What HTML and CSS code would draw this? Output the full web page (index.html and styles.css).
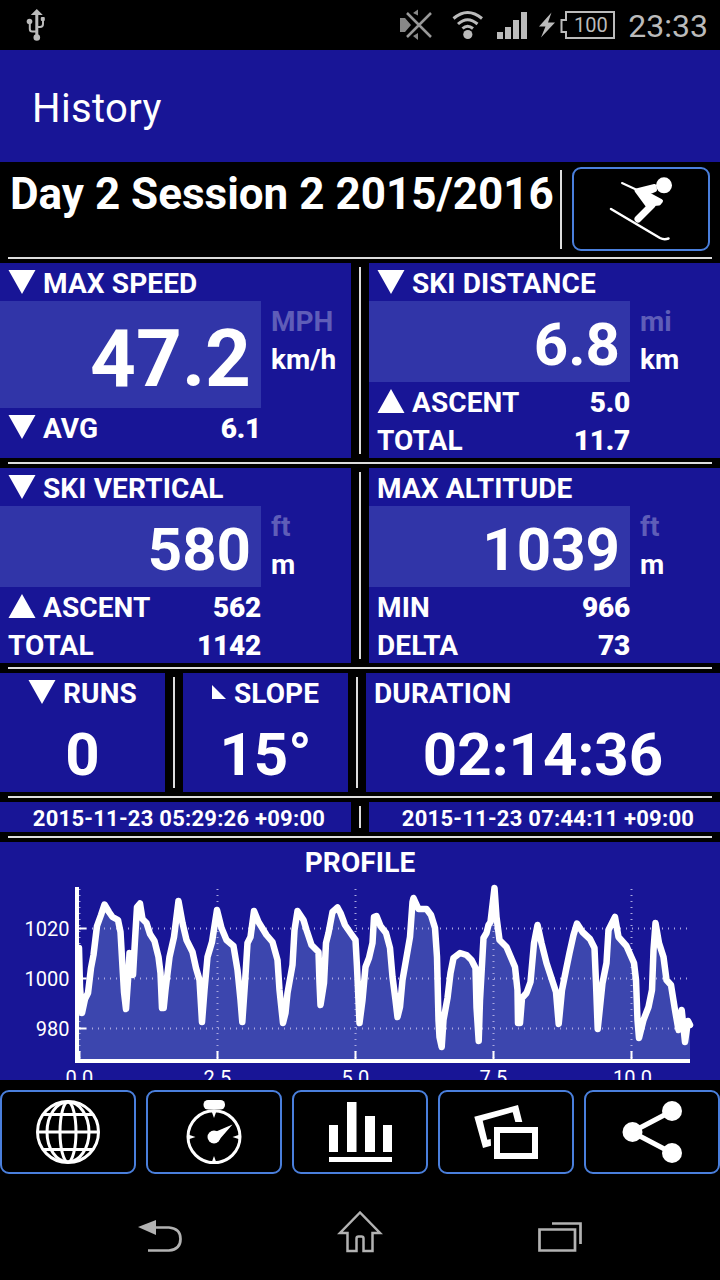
FILE: index.html
```html
<!DOCTYPE html>
<html lang="en">
<head>
    <meta charset="UTF-8">
    <meta name="viewport" content="width=device-width, initial-scale=1.0">
    <title>History</title>
    <link rel="stylesheet" href="styles.css">
</head>
<body>
    <svg class="defs" width="0" height="0">
        <symbol id="down" viewBox="0 0 28 24"><path d="M.5 0h27L14 24z"/></symbol>
        <symbol id="up" viewBox="0 0 28 24"><path d="M.5 24h27L14 0z"/></symbol>
    </svg>

    <div class="status-bar">
        <svg class="usb" width="20" height="34" viewBox="26 8 20 34">
            <path d="M36.800 9l6 6h-4.500v20h-3V15h-4.500z" fill="#bbb"/>
            <path d="M29.800 21v8q0 2.500 2.500 2.500h4.500M43 19v5q0 3-3 3h-3" fill="none" stroke="#bbb" stroke-width="2"/>
            <circle cx="29.500" cy="21.500" r="2.800" fill="#bbb"/>
            <circle cx="36.800" cy="37.500" r="3.300" fill="#bbb"/>
            <rect x="40.800" y="17" width="4" height="4" rx="1" fill="#bbb"/>
        </svg>
        <div class="status-right">
            <svg class="mute" width="32" height="32" viewBox="400 9 32 32">
                <path d="M400 18h5l6 7-6 7h-5zM413 13l5-3.500v6zM413 36l5 4v-7z" fill="#888"/>
                <path d="M407 13l24 24M431 13l-24 24" stroke="#000" stroke-width="5"/>
                <path d="M407 13l24 24M431 13l-24 24" stroke="#999" stroke-width="2.500"/>
            </svg>
            <svg class="wifi" width="32" height="30" viewBox="452 10 32 30">
                <path d="M453.500 18.500q14-12 28.500 0M458 24q9.500-8.500 19.500 0M462.500 28.500q5-4.500 10.500 0" fill="none" stroke="#bbb" stroke-width="3"/>
                <circle cx="467.800" cy="34.500" r="4.600" fill="#bbb"/>
            </svg>
            <svg class="signal" width="30" height="27" viewBox="0 0 30 27">
                <path d="M0 20h6v7H0zM8 15h6v12H8zM16 8h6v19h-6zM24 0h6v27h-6z" fill="#bbb"/>
            </svg>
            <svg class="bolt" width="17" height="26" viewBox="538 12 17 26">
                <path d="M551.500 12.500L539 26.500h6.500L541 37.500l14-15h-7z" fill="#bbb"/>
            </svg>
            <div class="battery">
                <svg width="56" height="28" viewBox="0 0 56 28">
                    <path d="M6 1h48v26H6v-6H1.500V9H6z" fill="none" stroke="#bbb" stroke-width="2"/>
                </svg>
                <span>100</span>
            </div>
            <span class="clock">23:33</span>
        </div>
    </div>

    <div class="app-bar">History</div>

    <div class="header">
        <h1>Day 2 Session 2 2015/2016</h1>
        <div class="vline"></div>
        <button class="btn activity">
            <svg width="64" height="68" viewBox="609 175 64 68">
                <g stroke="#fff" stroke-linecap="round" stroke-linejoin="round" fill="none">
                    <path d="M622 183l14 6.500" stroke-width="2"/>
                    <path d="M611 209l49 29q4 2 8.500 .5" stroke-width="2.500"/>
                    <path d="M652 205l-14 14" stroke-width="7"/>
                    <path d="M636.500 190.500l18-4.500 .5 4-8 3.500 14 7.500-2 2.500-5 .5-5 3.500z" stroke-width="4" fill="#fff"/>
                </g>
                <circle cx="664" cy="185.300" r="8" fill="#fff"/>
            </svg>
        </button>
    </div>
    <div class="rule"></div>

    <div class="row halves">
        <div class="panel">
            <div class="label"><svg><use href="#down"/></svg>MAX SPEED</div>
            <div class="reading">
                <div class="value large">47.2</div>
                <div class="units"><span class="off">MPH</span><span>km/h</span></div>
            </div>
            <div class="stat"><svg><use href="#down"/></svg>AVG<b>6.1</b></div>
        </div>
        <div class="vline"></div>
        <div class="panel">
            <div class="label"><svg><use href="#down"/></svg>SKI DISTANCE</div>
            <div class="reading">
                <div class="value">6.8</div>
                <div class="units"><span class="off">mi</span><span>km</span></div>
            </div>
            <div class="stat"><svg><use href="#up"/></svg>ASCENT<b>5.0</b></div>
            <div class="stat">TOTAL<b>11.7</b></div>
        </div>
    </div>
    <div class="rule"></div>

    <div class="row halves">
        <div class="panel">
            <div class="label"><svg><use href="#down"/></svg>SKI VERTICAL</div>
            <div class="reading">
                <div class="value">580</div>
                <div class="units"><span class="off">ft</span><span>m</span></div>
            </div>
            <div class="stat"><svg><use href="#up"/></svg>ASCENT<b>562</b></div>
            <div class="stat">TOTAL<b>1142</b></div>
        </div>
        <div class="vline"></div>
        <div class="panel">
            <div class="label">MAX ALTITUDE</div>
            <div class="reading">
                <div class="value">1039</div>
                <div class="units"><span class="off">ft</span><span>m</span></div>
            </div>
            <div class="stat">MIN<b>966</b></div>
            <div class="stat">DELTA<b>73</b></div>
        </div>
    </div>
    <div class="rule"></div>

    <div class="row thirds">
        <div class="panel">
            <div class="label center"><svg><use href="#down"/></svg>RUNS</div>
            <div class="count">0</div>
        </div>
        <div class="vline"></div>
        <div class="panel">
            <div class="label center"><svg class="slope" viewBox="0 0 14 14"><path d="M0 0v14h14z"/></svg>SLOPE</div>
            <div class="count">15°</div>
        </div>
        <div class="vline"></div>
        <div class="panel">
            <div class="label">DURATION</div>
            <div class="count">02:14:36</div>
        </div>
    </div>
    <div class="rule"></div>

    <div class="row halves dates">
        <div class="panel">2015-11-23 05:29:26 +09:00</div>
        <div class="vline"></div>
        <div class="panel">2015-11-23 07:44:11 +09:00</div>
    </div>
    <div class="rule"></div>

    <div class="panel profile">
        <div class="label center">PROFILE</div>
        <svg class="chart" width="720" height="200" viewBox="0 880 720 200">
            <path class="area" d="M78 1061V948L79 948 80 987 82 1013 85 999 88 993 91 968 93.500 955 97 926 101 915 104.500 904.500 109 912 112.500 917 118 920 120.500 932 122.500 967 124 992 126 1009 128.500 973 129.500 953 133 975 135 940 137 907 140 903.500 142.500 919 146.500 923 150 934 154.500 941 158.500 957 160.500 973 162 1008 163.700 1008 165.500 990 169.500 957 174 937 178.500 901 182.500 923 186.500 940 192.500 952 196 968 199.500 980 202 1022 204.500 990 207.500 957 212 942 217 910 221.500 928 226.500 940 233.500 946 237.500 970 240.500 1000 242.300 1022 245 983 247.500 943 250.500 937 254 911 258.500 922 266.500 935 272.500 942 277.500 960 279.500 990 283 1023 285.500 1013 287.500 993 292.500 965 294.500 930 297.500 911 303.500 920 306.500 930 311.500 945 318.500 952 319.500 983 320.500 1005 324 983 326 943 328.500 933 332.500 912 337.500 907.500 340.500 913 345 925 350.500 933 355.500 940 357 967 359.500 1023 362.500 1000 365.500 967 369 958 372.500 943 374 917 376.500 916 380.500 926 386 933 390 948 392.500 977 395.500 1000 397.500 1017 400 1007 402.500 980 406 960 410 937 412.500 902 413.500 898 418.500 909 426.500 909 431 915 435 928 437 957 438.500 1020 439.500 1037 441.700 1047 443.500 1020 447.500 998 450.500 973 453.500 958 460 953 466.500 955 471.500 960 475.500 968 476.500 1007 478.700 1041 480 1000 483.500 938 486.500 933 488.500 925 490.500 922 494.500 888 496.500 917 499.500 940 506.500 947 515 967 517.500 990 518 1023 520 1023 522 998 526.500 993 530.500 982 534 943 537.500 925 541.500 943 546.500 963 556 992 558.700 1024 562 990 566 970 569.500 953 573.500 935 577 923.500 582.500 932 590 939 594.500 948 596 983 597.700 1029 602.500 983 606.500 963 608.500 930 615 917 618.500 937 626.500 946 634 963 636 980 637.500 1020 639 1038 643.500 1020 648.500 1007 652 990 653.500 950 655.500 923 659 943 663.500 957 666.500 980 671 985 675 1010 678.500 1030 681.700 1010 685 1042 688 1021 690 1025V1061z"/>
            <path class="grid" d="M80 928.500H688M80 978.500H688M80 1028.500H688M79.500 889V1058M217.500 889V1058M355.500 889V1058M493.500 889V1058M631.500 889V1058"/>
            <path class="line" d="M79 948L80 987 82 1013 85 999 88 993 91 968 93.500 955 97 926 101 915 104.500 904.500 109 912 112.500 917 118 920 120.500 932 122.500 967 124 992 126 1009 128.500 973 129.500 953 133 975 135 940 137 907 140 903.500 142.500 919 146.500 923 150 934 154.500 941 158.500 957 160.500 973 162 1008 163.700 1008 165.500 990 169.500 957 174 937 178.500 901 182.500 923 186.500 940 192.500 952 196 968 199.500 980 202 1022 204.500 990 207.500 957 212 942 217 910 221.500 928 226.500 940 233.500 946 237.500 970 240.500 1000 242.300 1022 245 983 247.500 943 250.500 937 254 911 258.500 922 266.500 935 272.500 942 277.500 960 279.500 990 283 1023 285.500 1013 287.500 993 292.500 965 294.500 930 297.500 911 303.500 920 306.500 930 311.500 945 318.500 952 319.500 983 320.500 1005 324 983 326 943 328.500 933 332.500 912 337.500 907.500 340.500 913 345 925 350.500 933 355.500 940 357 967 359.500 1023 362.500 1000 365.500 967 369 958 372.500 943 374 917 376.500 916 380.500 926 386 933 390 948 392.500 977 395.500 1000 397.500 1017 400 1007 402.500 980 406 960 410 937 412.500 902 413.500 898 418.500 909 426.500 909 431 915 435 928 437 957 438.500 1020 439.500 1037 441.700 1047 443.500 1020 447.500 998 450.500 973 453.500 958 460 953 466.500 955 471.500 960 475.500 968 476.500 1007 478.700 1041 480 1000 483.500 938 486.500 933 488.500 925 490.500 922 494.500 888 496.500 917 499.500 940 506.500 947 515 967 517.500 990 518 1023 520 1023 522 998 526.500 993 530.500 982 534 943 537.500 925 541.500 943 546.500 963 556 992 558.700 1024 562 990 566 970 569.500 953 573.500 935 577 923.500 582.500 932 590 939 594.500 948 596 983 597.700 1029 602.500 983 606.500 963 608.500 930 615 917 618.500 937 626.500 946 634 963 636 980 637.500 1020 639 1038 643.500 1020 648.500 1007 652 990 653.500 950 655.500 923 659 943 663.500 957 666.500 980 671 985 675 1010 678.500 1030 681.700 1010 685 1042 688 1021 690 1025"/>
            <path class="axis" d="M77 887V1061H690"/>
            <path class="ticks" d="M77 928.500h9M77 978.500h9M77 1028.500h9M79.500 1051v9M217.500 1051v9M355.500 1051v9M493.500 1051v9M631.500 1051v9"/>
            <g text-anchor="end">
                <text x="69.500" y="936">1020</text>
                <text x="69.500" y="986">1000</text>
                <text x="69.500" y="1036">980</text>
            </g>
            <g text-anchor="middle">
                <text x="79.500" y="1085">0.0</text>
                <text x="217.500" y="1085">2.5</text>
                <text x="355.500" y="1085">5.0</text>
                <text x="493.500" y="1085">7.5</text>
                <text x="632.500" y="1085">10.0</text>
            </g>
        </svg>
    </div>

    <div class="tabs">
        <button class="btn">
            <svg width="64" height="64" viewBox="0 0 64 64" fill="none" stroke="#fff" stroke-width="3">
                <circle cx="32" cy="32" r="30.500"/>
                <ellipse cx="32" cy="32" rx="8" ry="30"/>
                <ellipse cx="32" cy="32" rx="21" ry="30"/>
                <path d="M1 32h62M7 14.500h50M7 49.500h50"/>
            </svg>
        </button>
        <button class="btn">
            <svg width="64" height="64" viewBox="0 0 64 64" fill="#fff">
                <rect x="21.500" y="0" width="21.500" height="9.500" rx="4.500"/>
                <circle cx="32" cy="36.800" r="26" fill="none" stroke="#fff" stroke-width="3"/>
                <circle cx="32" cy="37" r="6.500"/>
                <path d="M33 32l17.500-7.500L37 40zM29.500 11h5L32 18zM29.500 63h5L32 56zM6 34.500v5l7.500-2.500zM58 34.500v5L50.500 37z"/>
            </svg>
        </button>
        <button class="btn">
            <svg width="64" height="64" viewBox="0 0 64 64" fill="#fff">
                <path d="M1 25h9v27H1zM19 2h9.500v50H19zM37 16h10v36H37zM55 25h9v27h-9zM1 57h63v5H1z"/>
            </svg>
        </button>
        <button class="btn">
            <svg width="64" height="64" viewBox="0 0 64 64">
                <path d="M.3 16.700L44 5l4.300 17h-7l-2.600-9.700-30 8.400 4.600 19 3.400-.7.300 6.700-8 2.300z" fill="#fff"/>
                <rect x="23" y="30" width="38" height="26" fill="none" stroke="#fff" stroke-width="6"/>
            </svg>
        </button>
        <button class="btn">
            <svg width="64" height="64" viewBox="0 0 64 64" fill="#fff">
                <path d="M52 11L12 32l40 21" fill="none" stroke="#fff" stroke-width="5"/>
                <circle cx="52" cy="11" r="10"/>
                <circle cx="12.500" cy="32" r="10"/>
                <circle cx="52" cy="53" r="10"/>
            </svg>
        </button>
    </div>

    <div class="nav-bar">
        <svg width="46" height="46" viewBox="138 1209 46 46">
            <path d="M138 1227l18-7v15z" fill="#b2b2b2"/>
            <path d="M155 1227.500h14q11.500 1 11.500 11.500t-11.500 11.500h-21" fill="none" stroke="#b2b2b2" stroke-width="2.700"/>
        </svg>
        <svg width="46" height="46" viewBox="337 1209 46 46">
            <path d="M360 1212.500l-20 20.500h7.500v18h9v-12.500q0-2 2-2h3q2 0 2 2v12.500h9v-18h7.500z" fill="none" stroke="#b2b2b2" stroke-width="2.500"/>
        </svg>
        <svg width="46" height="46" viewBox="536 1209 46 46">
            <path d="M539.500 1229.500h35.500v21h-35.500zM552 1223.500h28.500v20.500" fill="none" stroke="#b2b2b2" stroke-width="2.700"/>
        </svg>
    </div>
</body>
</html>
```
FILE: styles.css
```css
* {
    box-sizing: border-box;
}
body {
    margin: 0;
    width: 720px;
    height: 1280px;
    overflow: hidden;
    background: #000;
    color: #fff;
    font-family: Roboto, sans-serif;
}
svg {
    display: block;
    flex: none;
}
.defs {
    display: none;
}

/* status bar */
.status-bar {
    height: 50px;
    padding: 0 12px 0 26px;
    display: flex;
    justify-content: space-between;
    align-items: center;
    color: #bbb;
}
.status-right {
    display: flex;
    align-items: center;
}
.wifi {
    margin-left: 20px;
}
.signal {
    margin-left: 13px;
}
.bolt {
    margin-left: 11px;
}
.battery {
    display: grid;
    margin-left: 5px;
}
.battery svg,
.battery span {
    grid-area: 1 / 1;
}
.battery span {
    padding-left: 5px;
    font-size: 20px;
    line-height: 28px;
    text-align: center;
}
.clock {
    margin-left: 12px;
    padding-top: 2px;
    font-size: 32px;
    line-height: 47px;
}

.app-bar {
    height: 112px;
    padding: 5px 0 0 32px;
    background: #181596;
    font-size: 40px;
    line-height: 107px;
    letter-spacing: 0.35px;
}

/* session header */
.header {
    display: flex;
    height: 91px;
    padding: 5px 10px 2px;
}
h1 {
    width: 550px;
    margin: 0;
    font-size: 44px;
    line-height: 54px;
    white-space: nowrap;
}
.header .vline {
    margin: 3px 10px 2px 0;
}
.btn {
    display: flex;
    align-items: center;
    justify-content: center;
    height: 84px;
    padding: 0;
    background: #000;
    border: 2px solid #4a7fdc;
    border-radius: 9px;
}
.activity {
    width: 138px;
}
.rule {
    height: 2px;
    margin: 4px 8px;
    background: #ddd;
}
.vline {
    width: 2px;
    margin: 4px 8px;
    background: #ddd;
}

/* data panels */
.row {
    display: grid;
}
.halves {
    grid-template-columns: 351px 18px 351px;
    height: 195px;
}
.thirds {
    grid-template-columns: 165px 18px 165px 18px 354px;
    height: 119px;
}
.panel {
    background: #181596;
    font-size: 28px;
    font-weight: bold;
}
.label,
.stat {
    display: flex;
    height: 38px;
    padding: 3px 0 0 8px;
    line-height: 35px;
    letter-spacing: 0.12px;
}
.label svg,
.stat svg {
    width: 28px;
    height: 24px;
    margin: 4px 7px 0 0;
    fill: #fff;
}
.label .slope {
    width: 14px;
    height: 14px;
    margin: 9px 8px 0 0;
}
.label.center {
    justify-content: center;
    padding-left: 0;
}
.stat {
    width: 261px;
}
.stat b {
    margin-left: auto;
    letter-spacing: -0.2px;
}
.reading {
    display: flex;
}
.value {
    width: 261px;
    height: 81px;
    padding: 6px 10px 0 0;
    background: #3135a8;
    font-size: 60px;
    line-height: 75px;
    text-align: right;
}
.value.large {
    height: 107px;
    padding-top: 9px;
    font-size: 80px;
    line-height: 98px;
}
.units {
    height: 76px;
    padding: 3px 0 0 10px;
}
.units span {
    display: block;
    line-height: 35px;
    margin-bottom: 3px;
}
.units .off {
    color: #5f5db8;
}
.count {
    padding-top: 6px;
    font-size: 60px;
    line-height: 75px;
    text-align: center;
}
.dates {
    height: 30px;
}
.dates .panel {
    padding: 3px 0 0 7px;
    font-size: 22px;
    line-height: 27px;
    letter-spacing: 0.24px;
    text-align: center;
}

/* altitude profile */
.profile {
    height: 238px;
}
.chart text {
    font-size: 20px;
    font-weight: normal;
    fill: #fff;
}
.area {
    fill: #3c46ae;
}
.grid {
    fill: none;
    stroke: #a9a8e0;
    stroke-width: 2;
    stroke-dasharray: 1 5;
}
.line {
    fill: none;
    stroke: #fff;
    stroke-width: 6.5;
    stroke-linecap: round;
    stroke-linejoin: round;
}
.axis {
    fill: none;
    stroke: #fff;
    stroke-width: 4;
}
.ticks {
    fill: none;
    stroke: #fff;
    stroke-width: 2;
}

.tabs {
    display: grid;
    grid-template-columns: repeat(5, 136px);
    gap: 10px;
    padding-top: 10px;
}
.nav-bar {
    display: flex;
    justify-content: center;
    gap: 153px;
    padding-top: 35px;
}
```
